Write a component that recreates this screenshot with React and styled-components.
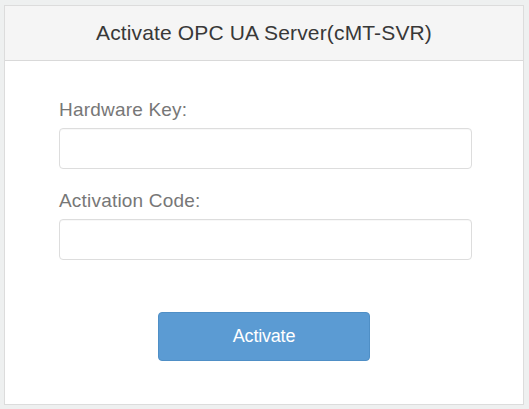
import React from "react";
import styled, {createGlobalStyle} from "styled-components";

const GlobalStyle = createGlobalStyle`
  html, body {
	margin: 0;
	padding: 0;
	background-color: #eef0f0;
  }

  body {
	font-family: "Liberation Sans", Arial, sans-serif;
  }
`;

const Page = styled.div`
  padding: 5px 5px 4px 4px;
`;

const Panel = styled.div`
  width: 520px;
  box-sizing: border-box;
  background-color: #ffffff;
  border: 1px solid #dcdcdc;
`;

const PanelHeader = styled.header`
  height: 54px;
  display: flex;
  align-items: center;
  justify-content: center;
  background-color: #f5f5f5;
  border-bottom: 1px solid #d9d9d9;
  color: #383838;
  font-size: 21px;
  letter-spacing: 0.15px;
`;

const PanelBody = styled.div`
  display: flex;
  flex-direction: column;
  padding: 35px 51px 43px 54px;
`;

const Field = styled.div`
  display: flex;
  flex-direction: column;
  gap: 5px;
  margin-bottom: ${props => props.$last ? "52px" : "18px"};
`;

const Label = styled.label`
  color: #777777;
  font-size: 19px;
  line-height: 27px;
  letter-spacing: 0.2px;
`;

const TextInput = styled.input`
  height: 41px;
  box-sizing: border-box;
  border: 1px solid #dddddd;
  border-radius: 4px;
  padding: 0 10px;
  font-family: inherit;
  font-size: 16px;
  outline: none;
  box-shadow: inset 0 1px 1px rgba(0, 0, 0, 0.03);
`;

const ActivateButton = styled.button`
  align-self: center;
  width: 212px;
  height: 49px;
  margin-left: -3px;
  border: 1px solid #4f8fc6;
  border-radius: 4px;
  background-color: #5b9bd3;
  color: #ffffff;
  font-family: inherit;
  font-size: 18px;
  letter-spacing: -0.2px;
  cursor: pointer;
`;

const App = () => {
	return (
		<>
			<GlobalStyle/>
			<Page>
				<Panel>
					<PanelHeader>Activate OPC UA Server(cMT-SVR)</PanelHeader>
					<PanelBody>
						<Field>
							<Label htmlFor="hardware-key">Hardware Key:</Label>
							<TextInput id="hardware-key" type="text"/>
						</Field>
						<Field $last>
							<Label htmlFor="activation-code">Activation Code:</Label>
							<TextInput id="activation-code" type="text"/>
						</Field>
						<ActivateButton>Activate</ActivateButton>
					</PanelBody>
				</Panel>
			</Page>
		</>
	)
}

export default App;
